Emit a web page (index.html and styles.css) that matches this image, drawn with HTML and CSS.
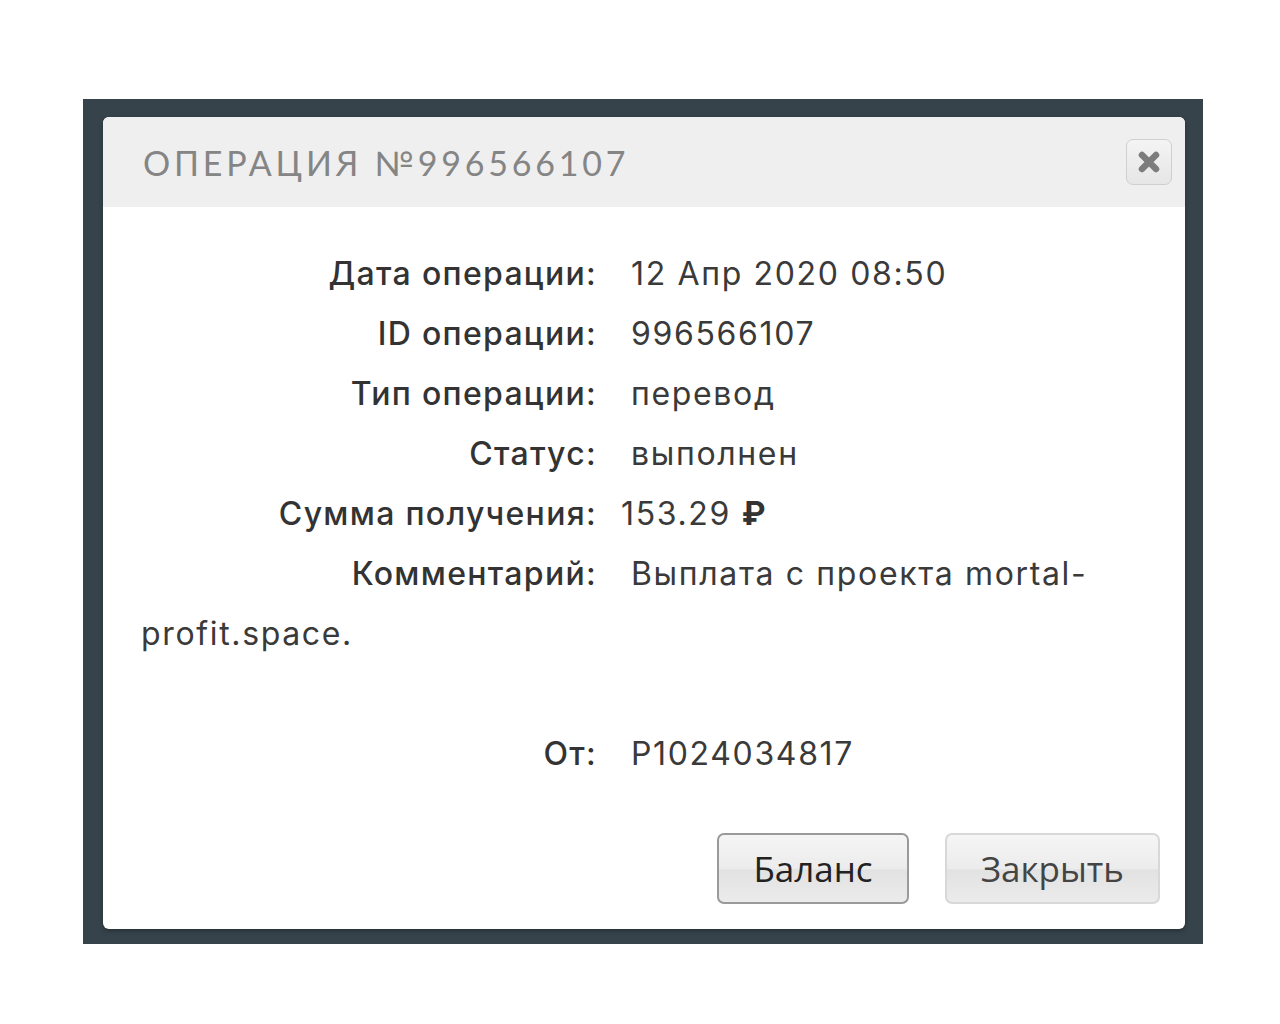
FILE: index.html
```html
<!DOCTYPE html>
<html lang="ru">
<head>
    <meta charset="UTF-8">
    <title>Операция №996566107</title>
    <link rel="stylesheet" href="styles.css">
</head>
<body>
    <div class="overlay">
        <div class="modal">
            <div class="modal-header">
                <h3 class="modal-title">Операция №996566107</h3>
                <button class="close-btn" type="button">
                    <svg width="24" height="24" viewBox="0 0 24 24"><path d="M5 5 L19 19 M19 5 L5 19" stroke="#7c7c7c" stroke-width="6.5" stroke-linecap="round"/></svg>
                </button>
            </div>
            <div class="modal-body">
                <div class="row"><span class="label">Дата операции:</span>12 Апр 2020 08:50</div>
                <div class="row"><span class="label">ID операции:</span>996566107</div>
                <div class="row"><span class="label">Тип операции:</span>перевод</div>
                <div class="row"><span class="label">Статус:</span>выполнен</div>
                <div class="row"><span class="label label-tight">Сумма получения:</span>153.29 <b>&#8381;</b></div>
                <div class="row"><span class="label">Комментарий:</span>Выплата с проекта mortal-profit.space.</div>
                <div class="row empty"></div>
                <div class="row"><span class="label">От:</span>P1024034817</div>
            </div>
            <div class="modal-footer">
                <button class="btn btn-focus" type="button">Баланс</button>
                <button class="btn" type="button">Закрыть</button>
            </div>
        </div>
    </div>
</body>
</html>
```

FILE: styles.css
```css
body {
    margin: 0;
    background: #fff;
    font-family: "Open Sans", "Liberation Sans", sans-serif;
}

.overlay {
    margin: 99px 0 0 83px;
    width: 1120px;
    height: 845px;
    background: #36434b;
    padding: 18px 0 0 20px;
    box-sizing: border-box;
}

.modal {
    width: 1082px;
    height: 812px;
    background: #fff;
    border-radius: 6px;
    box-shadow: 0 2px 4px rgba(0,0,0,0.3);
    display: flex;
    flex-direction: column;
}

.modal-header {
    background: #efefef;
    height: 90px;
    border-radius: 6px 6px 0 0;
    display: flex;
    align-items: center;
    justify-content: space-between;
    padding: 0 13px 0 40px;
}

.modal-title {
    margin: 0;
    font-family: "Lato", sans-serif;
    font-weight: 400;
    text-transform: uppercase;
    font-size: 34px;
    letter-spacing: 3.8px;
    color: #858585;
}

.close-btn {
    width: 46px;
    height: 46px;
    border: 1px solid #cfcfcf;
    border-radius: 7px;
    background: linear-gradient(#f4f4f4, #e6e6e6);
    padding: 0;
    display: flex;
    align-items: center;
    justify-content: center;
}

.modal-body {
    padding: 37px 34px 0 38px;
    font-family: "Inter", "Open Sans", sans-serif;
    font-size: 32px;
    letter-spacing: 1.65px;
    line-height: 60px;
    color: #3a3a3a;
    flex: 1;
}

.row.empty {
    height: 60px;
}

.label {
    display: inline-block;
    width: 456px;
    text-align: right;
    margin-right: 34px;
    font-weight: 500;
    letter-spacing: 1.3px;
    color: #333;
}

.label-tight {
    margin-right: 24px;
}

.row b {
    color: #333;
}

.modal-footer {
    display: flex;
    justify-content: flex-end;
    gap: 36px;
    padding: 0 25px 25px 0;
}

.btn {
    height: 71px;
    padding: 0 34px;
    font-family: "Open Sans", sans-serif;
    font-size: 35px;
    color: #444;
    border: 2px solid #d8d8d8;
    border-radius: 7px;
    background: linear-gradient(#f5f5f5 0%, #ececec 50%, #e2e2e2 52%, #ebebeb 100%);
}

.btn-focus {
    border-color: #9a9a9a;
    color: #222;
}
```
